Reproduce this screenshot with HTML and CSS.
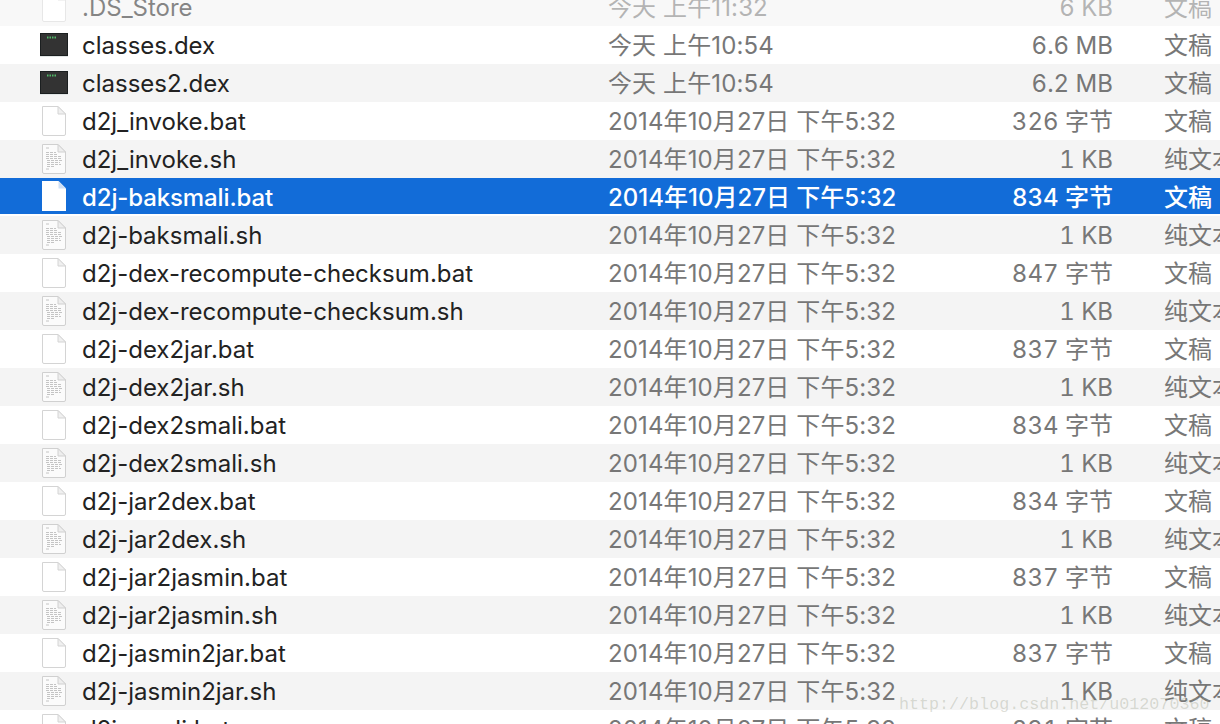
FILE: index.html
```html
<!DOCTYPE html>
<html lang="zh">
<head>
<meta charset="utf-8">
<title>Finder</title>
<link rel="stylesheet" href="styles.css">
</head>
<body>
<svg class="defs" width="0" height="0" aria-hidden="true">
  <symbol id="blank" viewBox="0 0 26 32">
    <path d="M1.5 1.5H17L24.5 9V29a1.5 1.5 0 0 1-1.5 1.5H3A1.5 1.5 0 0 1 1.5 29Z" fill="#fff" stroke="#d4d4d4" stroke-width="1"/>
    <path d="M17 1.5V9H24.5Z" fill="#f0f0f0" stroke="#d4d4d4" stroke-width="1"/>
  </symbol>
  <symbol id="solid" viewBox="0 0 26 32">
    <path d="M1 1H17.5L25 8.5V31H1Z" fill="#fff"/>
    <path d="M17.5 1V8.5H25Z" fill="#cfe0f5"/>
  </symbol>
  <symbol id="text" viewBox="0 0 26 32">
    <path d="M1.5 1.5H17L24.5 9V29a1.5 1.5 0 0 1-1.5 1.5H3A1.5 1.5 0 0 1 1.5 29Z" fill="#fbfbfb" stroke="#d0d0d0" stroke-width="1"/>
    <path d="M17 1.5V9H24.5Z" fill="#eee" stroke="#d0d0d0" stroke-width="1"/>
    <path d="M5 5H9M5 9.500H15M5 11.500H16M5 13.500H21M5 15.500H20M6 17.500H21M6 19.500H19M6 21.500H20M6 23.500H14M5 26H9" stroke="#c4c4c4" stroke-width="1" stroke-dasharray="3 1" fill="none"/>
  </symbol>
  <symbol id="term" viewBox="0 0 30 26">
    <rect x="1" y="2" width="28" height="23" fill="#e2e6e6"/>
    <rect x="1.500" y="1.500" width="27" height="22" fill="#333" stroke="#1b1f20" stroke-width="1"/>
    <path d="M8 5.500H9.500M10.500 5.500H12M13 5.500H14.500M15.500 5.500H17" stroke="#53b96a" stroke-width="2" fill="none"/>
  </symbol>
</svg>

<main class="list">
  <div class="row even faded"><svg class="ico"><use href="#blank"/></svg><span class="name">.DS_Store</span><span class="date">今天 上午11:32</span><span class="size">6 KB</span><span class="kind">文稿</span></div>
  <div class="row"><svg class="ico ico-term"><use href="#term"/></svg><span class="name">classes.dex</span><span class="date">今天 上午10:54</span><span class="size">6.6 MB</span><span class="kind">文稿</span></div>
  <div class="row even"><svg class="ico ico-term"><use href="#term"/></svg><span class="name">classes2.dex</span><span class="date">今天 上午10:54</span><span class="size">6.2 MB</span><span class="kind">文稿</span></div>
  <div class="row"><svg class="ico"><use href="#blank"/></svg><span class="name">d2j_invoke.bat</span><span class="date">2014年10月27日 下午5:32</span><span class="size">326 字节</span><span class="kind">文稿</span></div>
  <div class="row even"><svg class="ico"><use href="#text"/></svg><span class="name">d2j_invoke.sh</span><span class="date">2014年10月27日 下午5:32</span><span class="size">1 KB</span><span class="kind">纯文本文稿</span></div>
  <div class="row selected"><svg class="ico"><use href="#solid"/></svg><span class="name">d2j-baksmali.bat</span><span class="date">2014年10月27日 下午5:32</span><span class="size">834 字节</span><span class="kind">文稿</span></div>
  <div class="row even"><svg class="ico"><use href="#text"/></svg><span class="name">d2j-baksmali.sh</span><span class="date">2014年10月27日 下午5:32</span><span class="size">1 KB</span><span class="kind">纯文本文稿</span></div>
  <div class="row"><svg class="ico"><use href="#blank"/></svg><span class="name">d2j-dex-recompute-checksum.bat</span><span class="date">2014年10月27日 下午5:32</span><span class="size">847 字节</span><span class="kind">文稿</span></div>
  <div class="row even"><svg class="ico"><use href="#text"/></svg><span class="name">d2j-dex-recompute-checksum.sh</span><span class="date">2014年10月27日 下午5:32</span><span class="size">1 KB</span><span class="kind">纯文本文稿</span></div>
  <div class="row"><svg class="ico"><use href="#blank"/></svg><span class="name">d2j-dex2jar.bat</span><span class="date">2014年10月27日 下午5:32</span><span class="size">837 字节</span><span class="kind">文稿</span></div>
  <div class="row even"><svg class="ico"><use href="#text"/></svg><span class="name">d2j-dex2jar.sh</span><span class="date">2014年10月27日 下午5:32</span><span class="size">1 KB</span><span class="kind">纯文本文稿</span></div>
  <div class="row"><svg class="ico"><use href="#blank"/></svg><span class="name">d2j-dex2smali.bat</span><span class="date">2014年10月27日 下午5:32</span><span class="size">834 字节</span><span class="kind">文稿</span></div>
  <div class="row even"><svg class="ico"><use href="#text"/></svg><span class="name">d2j-dex2smali.sh</span><span class="date">2014年10月27日 下午5:32</span><span class="size">1 KB</span><span class="kind">纯文本文稿</span></div>
  <div class="row"><svg class="ico"><use href="#blank"/></svg><span class="name">d2j-jar2dex.bat</span><span class="date">2014年10月27日 下午5:32</span><span class="size">834 字节</span><span class="kind">文稿</span></div>
  <div class="row even"><svg class="ico"><use href="#text"/></svg><span class="name">d2j-jar2dex.sh</span><span class="date">2014年10月27日 下午5:32</span><span class="size">1 KB</span><span class="kind">纯文本文稿</span></div>
  <div class="row"><svg class="ico"><use href="#blank"/></svg><span class="name">d2j-jar2jasmin.bat</span><span class="date">2014年10月27日 下午5:32</span><span class="size">837 字节</span><span class="kind">文稿</span></div>
  <div class="row even"><svg class="ico"><use href="#text"/></svg><span class="name">d2j-jar2jasmin.sh</span><span class="date">2014年10月27日 下午5:32</span><span class="size">1 KB</span><span class="kind">纯文本文稿</span></div>
  <div class="row"><svg class="ico"><use href="#blank"/></svg><span class="name">d2j-jasmin2jar.bat</span><span class="date">2014年10月27日 下午5:32</span><span class="size">837 字节</span><span class="kind">文稿</span></div>
  <div class="row even"><svg class="ico"><use href="#text"/></svg><span class="name">d2j-jasmin2jar.sh</span><span class="date">2014年10月27日 下午5:32</span><span class="size">1 KB</span><span class="kind">纯文本文稿</span></div>
  <div class="row"><svg class="ico"><use href="#blank"/></svg><span class="name">d2j-smali.bat</span><span class="date">2014年10月27日 下午5:32</span><span class="size">831 字节</span><span class="kind">文稿</span></div>
</main>
<div class="watermark">http://blog.csdn.net/u012070360</div>
</body>
</html>
```
FILE: styles.css
```css
html, body {
  margin: 0;
  height: 100%;
  overflow: hidden;
  background: #fff;
}
.defs {
  position: absolute;
}
.list {
  margin-top: -12px;
  font-family: "Inter", "Noto Sans CJK SC", sans-serif;
  font-size: 24px;
  line-height: 28px;
  color: #222;
}
.row {
  display: grid;
  grid-template-columns: 26px 541px 250px 255px 1fr;
  align-items: center;
  height: 38px;
  padding-left: 41px;
  white-space: nowrap;
  overflow: hidden;
}
.even {
  background: #f4f4f4;
}
.ico {
  width: 26px;
  height: 32px;
}
.ico-term {
  width: 30px;
  height: 26px;
  margin-left: -2px;
}
.name, .date, .size, .kind {
  padding-top: 2px;
}
.name {
  padding-left: 15px;
}
.date, .size, .kind {
  color: #777;
}
.date {
  letter-spacing: 0.12px;
}
.size {
  text-align: right;
  font-feature-settings: "tnum";
}
.kind {
  padding-left: 51px;
}
.faded {
  opacity: 0.55;
}
.selected {
  height: 36px;
  margin-bottom: 2px;
  background: #126cd8;
  color: #fff;
  font-weight: 500;
}
.selected .name, .selected .date, .selected .size, .selected .kind {
  padding-top: 4px;
  color: #fff;
}
.selected .name {
  letter-spacing: -0.12px;
}
.selected .date {
  letter-spacing: 0;
}
.watermark {
  position: absolute;
  left: 899px;
  top: 695px;
  font-family: "Liberation Mono", monospace;
  font-size: 16.700px;
  color: rgba(150, 155, 135, 0.32);
  white-space: nowrap;
}
```
